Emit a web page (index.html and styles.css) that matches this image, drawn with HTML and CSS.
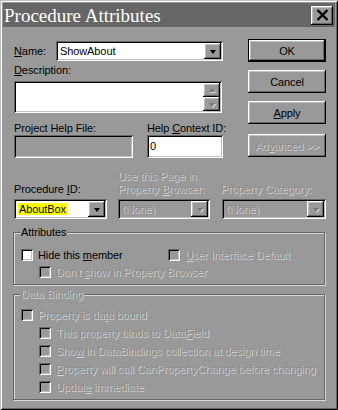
FILE: index.html
```html
<!DOCTYPE html>
<html lang="en">
<head>
  <meta charset="UTF-8" />
  <title>Procedure Attributes</title>
  <link rel="stylesheet" href="styles.css">
</head>
<body>
  <div class="window">
    <div class="titlebar">
      <span class="title">Procedure Attributes</span>
      <span class="close raised">
        <svg width="13" height="12" viewBox="0 0 13 12"><path d="M1.5 1L11.5 11M11.5 1L1.5 11" stroke="#000" stroke-width="2.4"/></svg>
      </span>
    </div>

    <div class="content">
      <div class="top">
        <div class="form">
          <div class="name-row">
            <span class="name-label"><u>N</u>ame:</span>
            <div class="combo sunken name-combo">
              <span class="value">ShowAbout</span>
              <span class="drop raised"><i class="arrow"></i></span>
            </div>
          </div>

          <div class="desc-label"><u>D</u>escription:</div>
          <div class="field sunken desc">
            <span class="spin">
              <span class="spin-btn raised"><i class="arrow up off"></i></span>
              <span class="spin-btn raised"><i class="arrow off"></i></span>
            </span>
          </div>

          <div class="help-row">
            <div class="help-file">
              <div class="lbl">Project Help File:</div>
              <div class="field sunken grey-field"></div>
            </div>
            <div class="help-id">
              <div class="lbl">Help <u>C</u>ontext ID:</div>
              <div class="field sunken white-field">0</div>
            </div>
          </div>
        </div>

        <div class="buttons">
          <button class="btn default">OK</button>
          <button class="btn raised">Cancel</button>
          <button class="btn raised"><u>A</u>pply</button>
          <button class="btn raised btn-off">Ad<u>v</u>anced &gt;&gt;</button>
        </div>
      </div>

      <div class="ids-row">
        <div class="col col-proc">
          <div class="lbl">Procedure <u>I</u>D:</div>
          <div class="combo sunken">
            <span class="value"><span class="hilite">AboutBox</span></span>
            <span class="drop raised"><i class="arrow"></i></span>
          </div>
        </div>
        <div class="col col-page">
          <div class="lbl dis">Use this Page in<br>Property <u>B</u>rowser:</div>
          <div class="combo sunken grey-field">
            <span class="value dis">(None)</span>
            <span class="drop raised"><i class="arrow off"></i></span>
          </div>
        </div>
        <div class="col col-cat">
          <div class="lbl dis">Property Category:</div>
          <div class="combo sunken grey-field">
            <span class="value dis">(None)</span>
            <span class="drop raised"><i class="arrow off"></i></span>
          </div>
        </div>
      </div>

      <div class="group attrs">
        <span class="legend">Attributes</span>
        <div class="row">
          <div class="check check-hide"><i class="box sunken"></i><span>Hide this <u>m</u>ember</span></div>
          <div class="check"><i class="box sunken off-box"></i><span class="dis"><u>U</u>ser Interface Default</span></div>
        </div>
        <div class="row sub">
          <div class="check"><i class="box sunken off-box"></i><span class="dis">Don't <u>s</u>how in Property Browser</span></div>
        </div>
      </div>

      <div class="group binding">
        <span class="legend dis">Data Binding</span>
        <div class="row">
          <div class="check"><i class="box sunken off-box"></i><span class="dis">Property is da<u>t</u>a bound</span></div>
        </div>
        <div class="row sub">
          <div class="check"><i class="box sunken off-box"></i><span class="dis">This property binds to Data<u>F</u>ield</span></div>
        </div>
        <div class="row sub">
          <div class="check"><i class="box sunken off-box"></i><span class="dis">Sho<u>w</u> in DataBindings collection at design time</span></div>
        </div>
        <div class="row sub">
          <div class="check"><i class="box sunken off-box"></i><span class="dis"><u>P</u>roperty will call CanPropertyChange before changing</span></div>
        </div>
        <div class="row sub">
          <div class="check"><i class="box sunken off-box"></i><span class="dis">Updat<u>e</u> immediate</span></div>
        </div>
      </div>
    </div>
  </div>
</body>
</html>
```

FILE: styles.css
```css
:root {
  --face: #999999;
  --hi: #ffffff;
  --lt: #c0c0c0;
  --sh: #666666;
  --dk: #000000;
}

body {
  margin: 0;
  padding: 0;
  background: var(--face);
  font-family: "Liberation Sans", Arial, sans-serif;
  font-size: 11px;
  letter-spacing: -0.1px;
  color: #000;
}

u {
  text-decoration: underline;
  text-underline-offset: 1px;
}

.window {
  width: 338px;
  height: 410px;
  box-sizing: border-box;
  background: var(--face);
  box-shadow: inset 1px 1px var(--lt), inset -1px -1px var(--dk),
              inset 2px 2px var(--hi), inset -2px -2px var(--sh);
  overflow: hidden;
}

.raised {
  background: var(--face);
  box-shadow: inset -1px -1px var(--dk), inset 1px 1px var(--hi),
              inset -2px -2px var(--sh), inset 2px 2px var(--lt);
}

.sunken {
  box-shadow: inset 1px 1px var(--sh), inset -1px -1px var(--hi),
              inset 2px 2px var(--dk), inset -2px -2px var(--lt);
}

.dis {
  color: #8c8c8c;
  text-shadow: 1px 1px #d4d4d4;
}

/* title */
.titlebar {
  margin: 3px 3px 0 3px;
  height: 24px;
  background: #666666;
  display: flex;
  align-items: center;
  justify-content: space-between;
}

.title {
  font-family: "Liberation Serif", "Times New Roman", serif;
  font-size: 19px;
  letter-spacing: 0;
  color: #fff;
  padding-left: 1px;
  padding-top: 1px;
}

.close {
  width: 22px;
  height: 19px;
  margin-right: 2px;
  display: flex;
  align-items: center;
  justify-content: center;
}

/* body */
.content {
  padding: 12px 12px 0 13px;
}

.top {
  display: flex;
  gap: 25px;
}

.form {
  width: 210px;
  padding-top: 2px;
}

.name-row {
  display: flex;
  align-items: center;
}

.name-label {
  width: 42px;
  padding-left: 1px;
}

.combo {
  display: flex;
  align-items: center;
  height: 20px;
  box-sizing: border-box;
  padding: 2px;
  background: #fff;
}

.combo .value {
  flex: 1;
  padding-left: 2px;
  white-space: nowrap;
  overflow: hidden;
}

.name-combo {
  width: 167px;
}

.drop {
  width: 17px;
  height: 16px;
  display: flex;
  align-items: center;
  justify-content: center;
}

.arrow {
  display: block;
  width: 0;
  height: 0;
  border-left: 3.5px solid transparent;
  border-right: 3.5px solid transparent;
  border-top: 4px solid #000;
  margin-top: 1px;
}

.arrow.up {
  border-top: none;
  border-bottom: 4px solid #777;
  margin-top: 0;
}

.arrow.off {
  border-top-color: #777;
  filter: drop-shadow(1px 1px 0 #ddd);
}

.desc-label {
  margin-top: 3px;
  padding-left: 1px;
  line-height: 13px;
}

.field {
  box-sizing: border-box;
  padding: 2px;
}

.desc {
  margin-top: 4px;
  margin-left: 1px;
  width: 208px;
  height: 32px;
  background: #fff;
  display: flex;
  justify-content: flex-end;
}

.spin {
  display: flex;
  flex-direction: column;
  width: 17px;
}

.spin-btn {
  flex: 1;
  display: flex;
  align-items: center;
  justify-content: center;
}

.help-row {
  display: flex;
  gap: 14px;
  margin-top: 9px;
  padding-left: 1px;
}

.lbl {
  line-height: 13px;
}

.help-file {
  width: 119px;
}

.help-file .field {
  height: 23px;
}

.grey-field {
  background: var(--face);
}

.help-id {
  width: 76px;
}

.white-field {
  background: #fff;
  height: 23px;
  padding: 4px 3px;
  line-height: 15px;
}

.help-id .lbl {
  white-space: nowrap;
}

.buttons {
  display: flex;
  flex-direction: column;
  gap: 8px;
  width: 78px;
}

.btn {
  height: 23px;
  border: none;
  font-family: inherit;
  font-size: 11px;
  letter-spacing: -0.1px;
  color: #000;
  padding: 0;
}

.btn.default {
  border: 1px solid #000;
  background: var(--face);
  box-shadow: inset -1px -1px var(--dk), inset 1px 1px var(--hi),
              inset -2px -2px var(--sh), inset 2px 2px var(--lt);
}

.btn.btn-off {
  margin-top: 2px;
  color: #8c8c8c;
  text-shadow: 1px 1px #d4d4d4;
}

/* id combos */
.ids-row {
  display: flex;
  align-items: flex-end;
  margin-top: 12px;
  padding-left: 1px;
}

.col .lbl {
  margin-bottom: 3px;
}

.col-proc {
  width: 93px;
  margin-right: 11px;
}

.col-page {
  width: 92px;
  margin-right: 12px;
}

.col-cat {
  width: 104px;
}

.col-cat .lbl {
  margin-left: -1px;
}

.hilite {
  background: #ffff00;
  padding: 0 1px;
}

/* groups */
.group {
  position: relative;
  width: 312px;
  box-sizing: border-box;
  border: 1px solid var(--sh);
  box-shadow: inset 1px 1px #d8d8d8, 1px 1px #d8d8d8;
  padding: 0 0 0 7px;
}

.legend {
  position: absolute;
  top: -8px;
  left: 6px;
  padding: 0 1px;
  background: var(--face);
  line-height: 14px;
}

.attrs {
  margin-top: 13px;
  height: 53px;
  padding-top: 13px;
}

.binding {
  margin-top: 9px;
  height: 106px;
  padding-top: 11px;
}

.row {
  display: flex;
  height: 17px;
  align-items: center;
}

.binding .row {
  height: 18px;
}

.row.sub {
  padding-left: 18px;
}

.check {
  display: flex;
  align-items: center;
  gap: 5px;
  white-space: nowrap;
}

.check-hide {
  width: 147px;
}

.box {
  display: block;
  width: 12px;
  height: 12px;
  background: #fff;
}

.box.off-box {
  background: var(--face);
}
```
